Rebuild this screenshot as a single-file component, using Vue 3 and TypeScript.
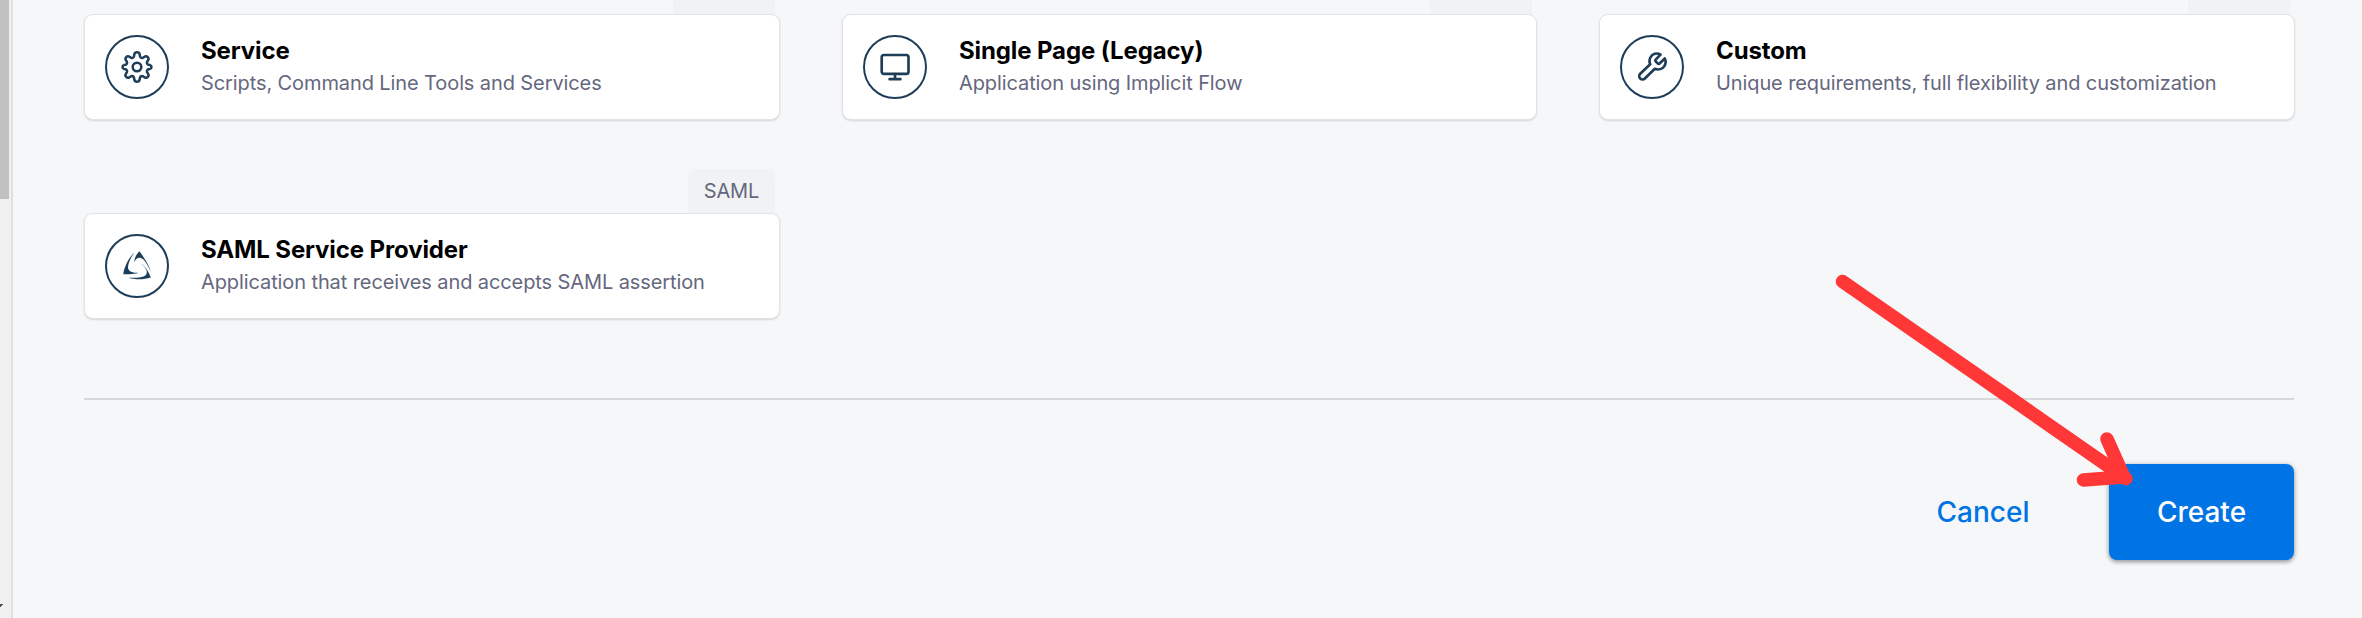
<script setup lang="ts">
type IconName = 'gear' | 'monitor' | 'wrench' | 'saml'

interface AppType {
  title: string
  description: string
  icon: IconName
  tag: string
}

const rows: AppType[][] = [
  [
    { title: 'Service', description: 'Scripts, Command Line Tools and Services', icon: 'gear', tag: '' },
    { title: 'Single Page (Legacy)', description: 'Application using Implicit Flow', icon: 'monitor', tag: '' },
    { title: 'Custom', description: 'Unique requirements, full flexibility and customization', icon: 'wrench', tag: '' },
  ],
  [
    { title: 'SAML Service Provider', description: 'Application that receives and accepts SAML assertion', icon: 'saml', tag: 'SAML' },
  ],
]
</script>

<template>
  <div class="page">
    <aside class="scroll">
      <div class="thumb"></div>
      <svg class="down" width="3" height="3" viewBox="0 0 3 3"><path d="M0 0h3v1h-1v1h-1v1h-1z" fill="#505050" /></svg>
    </aside>
    <main class="content">
      <div v-for="(row, r) in rows" :key="r" class="row">
        <div v-for="item in row" :key="item.title" class="item">
          <div class="tag" :class="{ clipped: !item.tag }">{{ item.tag }}</div>
          <div class="card">
            <div class="ring">
              <svg v-if="item.icon === 'gear'" class="icon gear" viewBox="0 0 32 32">
                <circle cx="16" cy="16" r="4.3" />
                <path d="M13.3 3.4a2.75 2.75 0 0 1 5.4 0l.3 1.9a2.2 2.2 0 0 0 3.2 1.3l1.3-.8a2.5 2.5 0 0 1 3.5 3.5l-.8 1.3a2.2 2.2 0 0 0 1.3 3.2l1.500.3a1.950 1.950 0 0 1 0 3.800l-1.500.3a2.2 2.2 0 0 0-1.3 3.200l.8 1.300a2.5 2.5 0 0 1-3.5 3.5l-1.300-.8a2.2 2.2 0 0 0-3.2 1.300l-.3 1.900a2.75 2.75 0 0 1-5.4 0l-.3-1.900a2.2 2.2 0 0 0-3.2-1.300l-1.300.8a2.5 2.5 0 0 1-3.5-3.500l.8-1.300a2.2 2.2 0 0 0-1.3-3.200l-1.500-.3a1.950 1.950 0 0 1 0-3.800l1.500-.3a2.2 2.2 0 0 0 1.3-3.200l-.8-1.300a2.5 2.5 0 0 1 3.5-3.500l1.300.8a2.2 2.2 0 0 0 3.2-1.300z" />
              </svg>
              <svg v-else-if="item.icon === 'monitor'" class="icon" viewBox="0 0 32 32">
                <rect x="2.7" y="4" width="26.8" height="18.9" rx="2.2" />
                <path d="M16 23v5.2M10.6 28.2h10.8" />
              </svg>
              <svg v-else-if="item.icon === 'wrench'" class="icon" viewBox="0 0 32 32">
                <path d="M24.5 3.6C20.8 1.3 16.3 2.9 14.4 6.5c-1.1 2.1-1.1 4.6-.2 6.8L4.2 22.8a3.3 3.3 0 0 0 4.7 4.7l9.9-9.7c3.6 1.4 7.8.2 9.8-3.1 1.3-2.2 1.3-4.8.2-7.2l-5 4.8a1.6 1.6 0 0 1-2.2 0l-1.7-1.7a1.6 1.6 0 0 1 0-2.2z" />
              </svg>
              <svg v-else class="icon solid" viewBox="0 0 32 32">
                <path d="M18.4 1.2c4.6 6.2 9.2 13 11.6 21-3.2-6.6-5.6-12.2-9.6-14-3.6-1.2-5.8 1-7.2 4.3.2-4.6 2.200-8.500 5.200-11.300z" />
                <path d="M13 2.8C8.8 9.5 6.3 15 7.2 18.8c.9 3.2 5.4 4 10.6 4.2-4.800 1.200-10.400 1.300-15.600 1.200C3.400 16.500 7.300 8.500 13 2.800z" />
                <path d="M17.6 12.2c6 2.6 9.8 8.6 12.2 15.2-7.200 2.400-15.800 2.300-22.400.3 5.600.3 12 .2 15-1.100 3.300-1.300 3.900-3.700 3-6.600-1.200-3.200-4.300-5.800-7.800-7.800z" />
              </svg>
            </div>
            <div class="text">
              <h3>{{ item.title }}</h3>
              <p>{{ item.description }}</p>
            </div>
          </div>
        </div>
      </div>
      <hr />
      <footer>
        <button class="cancel" type="button">Cancel</button>
        <button class="create" type="button">Create</button>
      </footer>
    </main>
    <svg class="pointer" width="310" height="220" viewBox="0 0 310 220">
      <path d="M12.5 12.5L296 209.5M277 170L293.5 207M253.5 211L293 208" />
    </svg>
  </div>
</template>

<style>
body {
  margin: 0;
  overflow: hidden;
}
</style>

<style scoped>
.page {
  position: relative;
  display: flex;
  width: 2362px;
  height: 618px;
  overflow: hidden;
  background: #f6f7f9;
  font-family: Inter, "Liberation Sans", sans-serif;
}
.scroll {
  box-sizing: border-box;
  display: flex;
  flex-direction: column;
  justify-content: space-between;
  width: 13px;
  height: 618px;
  padding-bottom: 11px;
  background: #f0f0f0;
  border-right: 2px solid #e0e0e0;
}
.thumb {
  width: 9px;
  height: 199px;
  background: #c1c1c1;
}
.down {
  display: block;
}
.content {
  width: 2209px;
  margin-left: 72px;
  margin-top: -30px;
}
.row {
  display: grid;
  grid-template-columns: 694px 693px 694px;
  justify-content: space-between;
  margin-bottom: 50px;
}
.item {
  display: flex;
  flex-direction: column;
}
.tag {
  box-sizing: border-box;
  align-self: flex-end;
  height: 45px;
  margin-right: 4px;
  padding: 0 16px;
  border-radius: 8px 8px 0 0;
  background: #f1f2f4;
  color: #65677e;
  font-size: 20px;
  letter-spacing: -0.2px;
  line-height: 44px;
}
.tag.clipped {
  width: 102px;
}
.card {
  box-sizing: border-box;
  display: flex;
  align-items: center;
  height: 104px;
  padding-left: 20px;
  border-radius: 8px;
  background: #fff;
  box-shadow: 0 0 0 1px #e1e3e5, 0 1px 2px 1px rgba(0, 0, 0, 0.14);
}
.ring {
  box-sizing: border-box;
  display: flex;
  align-items: center;
  justify-content: center;
  flex: none;
  width: 64px;
  height: 64px;
  border: 2px solid #1e3d59;
  border-radius: 50%;
}
.icon {
  width: 32px;
  height: 32px;
  fill: none;
  stroke: #1e3d59;
  stroke-width: 2.67;
  stroke-linecap: round;
  stroke-linejoin: round;
}
.icon.gear {
  overflow: visible;
  stroke-width: 2.5;
}
.icon.solid {
  fill: #1e3d59;
  stroke: none;
}
.text {
  margin-left: 32px;
}
h3,
p {
  margin: 0;
  white-space: nowrap;
}
h3 {
  color: #000;
  font-size: 24px;
  font-weight: 700;
  letter-spacing: -0.12px;
  line-height: 32px;
}
p {
  color: #65677e;
  font-size: 20px;
  letter-spacing: -0.1px;
  line-height: 32px;
}
hr {
  height: 2px;
  margin: 80px 0 64px -1px;
  border: 0;
  background: #d6d8db;
}
footer {
  display: flex;
  justify-content: flex-end;
}
button {
  height: 96px;
  padding: 0;
  border: 0;
  background: none;
  font-family: inherit;
  font-size: 28px;
  font-weight: 500;
}
.cancel {
  width: 186px;
  margin-right: 33px;
  color: #0074e4;
}
.create {
  width: 185px;
  border-radius: 8px;
  background: #0074e4;
  color: #fff;
  box-shadow: 0 2px 4px rgba(0, 0, 0, 0.35), 0 0 6px rgba(0, 0, 0, 0.12);
}
.pointer {
  position: absolute;
  left: 1830px;
  top: 269px;
  fill: none;
  stroke: #ff3737;
  stroke-width: 13.5;
  stroke-linecap: round;
  stroke-linejoin: round;
}
</style>
